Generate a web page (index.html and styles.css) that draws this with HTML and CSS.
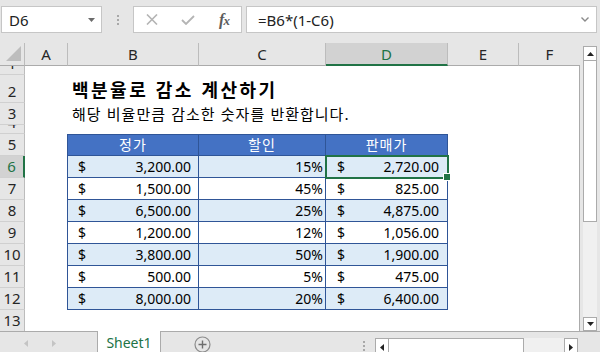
FILE: index.html
```html
<!DOCTYPE html>
<html lang="ko">
<head>
    <meta charset="UTF-8">
    <meta name="viewport" content="width=device-width, initial-scale=1.0">
    <title>백분율로 감소 계산하기</title>
    <link rel="stylesheet" href="styles.css">
</head>
<body>
<div class="app">

    <!-- Name box + formula bar -->
    <div class="formula-bar">
        <div class="name-box">
            <span>D6</span>
            <svg width="7" height="4" viewBox="0 0 7 4"><path d="M0 0h7L3.5 4z" fill="#6b6b6b"/></svg>
        </div>
        <div class="splitter"><i></i><i></i><i></i></div>
        <div class="fn-box">
            <svg width="12" height="11" viewBox="0 0 12 11"><path d="M1 0.5l10 10M11 0.5l-10 10" stroke="#b4b4b4" stroke-width="1.6" fill="none"/></svg>
            <svg width="14" height="10" viewBox="0 0 14 10"><path d="M1 5l4 4 8-8" stroke="#b4b4b4" stroke-width="1.8" fill="none"/></svg>
            <span class="fx">f<small>x</small></span>
        </div>
        <div class="formula-input">
            <span>=B6*(1-C6)</span>
            <svg width="8" height="5" viewBox="0 0 8 5"><path d="M0.5 0.5l3.5 3.5 3.5-3.5" stroke="#8a8a8a" stroke-width="1.4" fill="none"/></svg>
        </div>
    </div>

    <div class="sheet">
        <div class="grid">
            <div class="row heads">
                <div class="corner"><svg width="16" height="16" viewBox="0 0 16 16"><path d="M15 0v15H0z" fill="#bdbdbd"/></svg></div>
                <div>A</div><div>B</div><div>C</div><div class="on">D</div><div>E</div><div>F</div>
            </div>

            <div class="row r-thin">
                <div class="rh">1</div><div></div><div></div><div></div><div></div><div></div><div></div>
            </div>
            <div class="row r-title">
                <div class="rh">2</div><div></div><div class="title">백분율로 감소 계산하기</div><div></div><div></div><div></div><div></div>
            </div>
            <div class="row">
                <div class="rh">3</div><div></div><div class="subtitle">해당 비율만큼 감소한 숫자를 반환합니다.</div><div></div><div></div><div></div><div></div>
            </div>
            <div class="row r-thin">
                <div class="rh">4</div><div></div><div></div><div></div><div></div><div></div><div></div>
            </div>

            <div class="row thead">
                <div class="rh">5</div><div class="edge"></div>
                <div class="th">정가</div><div class="th">할인</div><div class="th">판매가</div>
                <div></div><div></div>
            </div>
            <div class="row tr alt">
                <div class="rh on">6</div><div class="edge"></div>
                <div class="td acct b"><span>$</span><span>3,200.00</span></div>
                <div class="td pct">15%</div>
                <div class="td acct d selected"><span>$</span><span>2,720.00</span></div>
                <div></div><div></div>
            </div>
            <div class="row tr">
                <div class="rh">7</div><div class="edge"></div>
                <div class="td acct b"><span>$</span><span>1,500.00</span></div>
                <div class="td pct">45%</div>
                <div class="td acct d"><span>$</span><span>825.00</span></div>
                <div></div><div></div>
            </div>
            <div class="row tr alt">
                <div class="rh">8</div><div class="edge"></div>
                <div class="td acct b"><span>$</span><span>6,500.00</span></div>
                <div class="td pct">25%</div>
                <div class="td acct d"><span>$</span><span>4,875.00</span></div>
                <div></div><div></div>
            </div>
            <div class="row tr">
                <div class="rh">9</div><div class="edge"></div>
                <div class="td acct b"><span>$</span><span>1,200.00</span></div>
                <div class="td pct">12%</div>
                <div class="td acct d"><span>$</span><span>1,056.00</span></div>
                <div></div><div></div>
            </div>
            <div class="row tr alt">
                <div class="rh">10</div><div class="edge"></div>
                <div class="td acct b"><span>$</span><span>3,800.00</span></div>
                <div class="td pct">50%</div>
                <div class="td acct d"><span>$</span><span>1,900.00</span></div>
                <div></div><div></div>
            </div>
            <div class="row tr">
                <div class="rh">11</div><div class="edge"></div>
                <div class="td acct b"><span>$</span><span>500.00</span></div>
                <div class="td pct">5%</div>
                <div class="td acct d"><span>$</span><span>475.00</span></div>
                <div></div><div></div>
            </div>
            <div class="row tr alt">
                <div class="rh">12</div><div class="edge"></div>
                <div class="td acct b"><span>$</span><span>8,000.00</span></div>
                <div class="td pct">20%</div>
                <div class="td acct d"><span>$</span><span>6,400.00</span></div>
                <div></div><div></div>
            </div>
            <div class="row">
                <div class="rh">13</div><div></div><div></div><div></div><div></div><div></div><div></div>
            </div>
        </div>

        <!-- vertical scrollbar -->
        <div class="vscroll">
            <div class="sbtn"><svg width="7" height="4" viewBox="0 0 7 4"><path d="M0 4h7L3.5 0z" fill="#222"/></svg></div>
            <div class="vthumb"></div>
            <div class="vtrack"></div>
            <div class="sbtn down"><svg width="7" height="4" viewBox="0 0 7 4"><path d="M0 0h7L3.5 4z" fill="#222"/></svg></div>
        </div>
    </div>

    <!-- sheet tabs -->
    <div class="tab-bar">
        <div class="tab-nav">
            <svg width="4" height="7" viewBox="0 0 4 7"><path d="M4 0v7L0 3.5z" fill="#c4c4c4"/></svg>
            <svg width="4" height="7" viewBox="0 0 4 7"><path d="M0 0v7l4-3.5z" fill="#c4c4c4"/></svg>
        </div>
        <div class="tab active">Sheet1</div>
        <div class="tab-add">
            <svg width="17" height="17" viewBox="0 0 17 17"><circle cx="8.5" cy="8.5" r="7.5" stroke="#8c8c8c" stroke-width="1.2" fill="none"/><path d="M8.5 4.5v8M4.5 8.5h8" stroke="#6e6e6e" stroke-width="1.4"/></svg>
        </div>
        <div class="hsplit"><i></i><i></i><i></i></div>
        <div class="hscroll">
            <div class="sbtn"><svg width="4" height="7" viewBox="0 0 4 7"><path d="M4 0v7L0 3.5z" fill="#222"/></svg></div>
            <div class="hthumb"></div>
            <div class="htrack"></div>
            <div class="sbtn"><svg width="4" height="7" viewBox="0 0 4 7"><path d="M0 0v7l4-3.5z" fill="#222"/></svg></div>
        </div>
    </div>

</div>
</body>
</html>
```

FILE: styles.css
```css
* {
    box-sizing: border-box;
}

body {
    margin: 0;
    background: #e6e6e6;
    font-family: "Noto Sans", "Noto Sans CJK KR", sans-serif;
    font-size: 14px;
    color: #000;
}

.app {
    width: 600px;
    height: 352px;
    display: flex;
    flex-direction: column;
    overflow: hidden;
}

/* ---------- formula bar ---------- */
.formula-bar {
    height: 43px;
    flex: none;
    display: flex;
    padding: 6px 0 0 1px;
}

.name-box {
    width: 101px;
    height: 27px;
    background: #fff;
    border: 1px solid #c6c6c6;
    display: flex;
    align-items: center;
    justify-content: space-between;
    padding: 0 6px 0 7px;
    font-size: 15px;
    color: #222;
}

.splitter {
    width: 31px;
    height: 27px;
    display: flex;
    flex-direction: column;
    align-items: center;
    justify-content: center;
    gap: 2px;
}

.splitter i, .hsplit i {
    display: block;
    width: 2px;
    height: 2px;
    background: #a8a8a8;
}

.fn-box {
    width: 109px;
    height: 27px;
    background: #fff;
    border: 1px solid #c6c6c6;
    display: grid;
    grid-template-columns: repeat(3, 36px);
    align-items: center;
    justify-items: center;
}

.fx {
    font-family: "Liberation Serif", serif;
    font-style: italic;
    font-weight: bold;
    font-size: 16px;
    color: #5c5c5c;
    letter-spacing: -1px;
}

.fx small {
    font-size: 13px;
}

.formula-input {
    margin-left: 4px;
    width: 351px;
    height: 27px;
    background: #fff;
    border: 1px solid #c6c6c6;
    display: flex;
    align-items: center;
    justify-content: space-between;
    padding: 0 7px 0 11px;
    font-size: 15px;
    color: #222;
}

/* ---------- sheet grid ---------- */
.sheet {
    height: 288px;
    flex: none;
    display: flex;
}

.grid {
    width: 580px;
    height: 288px;
    overflow: hidden;
}

.row {
    display: grid;
    grid-template-columns: 25px 43px 131px 127px 122px 71px 61px;
    height: 22px;
    line-height: 20px;
}

.row > div {
    background: #fff;
}

.row > div:last-child {
    border-right: 1px solid #ababab;
}

.heads {
    height: 23px;
}

.heads > div {
    background: #e6e6e6;
    border-right: 1px solid #bcbcbc;
    border-bottom: 1px solid #ababab;
    display: flex;
    align-items: center;
    justify-content: center;
    font-size: 15px;
    color: #262626;
}

.heads > div.corner {
    justify-content: flex-end;
    align-items: flex-end;
    padding: 0 2px 3px 0;
}

.heads > div.on {
    background: #d2d2d2;
    border-bottom: 2px solid #217346;
    color: #217346;
}

.heads > div:last-child {
    border-right: none;
}

.r-thin {
    height: 9px;
}

.r-title {
    height: 28px;
}

.row > .rh {
    background: #e6e6e6;
    border-right: 1px solid #bcbcbc;
    border-bottom: 1px solid #d0d0d0;
    display: flex;
    align-items: flex-end;
    justify-content: center;
    overflow: hidden;
    font-size: 15px;
    line-height: 22px;
    color: #262626;
}

.row > .rh.on {
    background: #d2d2d2;
    border-right: 2px solid #217346;
    color: #217346;
}

.title, .subtitle {
    white-space: nowrap;
    padding-left: 4px;
    font-family: "Noto Sans CJK KR", sans-serif;
}

.title {
    font-size: 18px;
    font-weight: bold;
    line-height: 28px;
    letter-spacing: 2.5px;
    position: relative;
    z-index: 1;
}

.subtitle {
    font-size: 15px;
    line-height: 21px;
    letter-spacing: 1px;
    position: relative;
    z-index: 1;
}

/* ---------- table ---------- */
.row > .edge {
    border-right: 1px solid #2f5597;
}

.thead > .th {
    background: #4472c4;
    color: #fff;
    border-top: 1px solid #2f5597;
    border-bottom: 1px solid #2f5597;
    border-right: 1px solid #2f5597;
    text-align: center;
    font-family: "Noto Sans CJK KR", sans-serif;
    font-size: 14px;
    line-height: 19px;
    letter-spacing: 1px;
}

.tr > .td {
    border-right: 1px solid #2f5597;
    border-bottom: 1px solid #2f5597;
    line-height: 21px;
}

.tr.alt > .td {
    background: #ddebf7;
}

.acct {
    display: flex;
    justify-content: space-between;
}

.acct.b {
    padding: 0 7px 0 10px;
}

.acct.d {
    padding: 0 8px 0 11px;
}

.pct {
    text-align: right;
    padding-right: 2px;
}

.selected {
    position: relative;
}

.selected::after {
    content: '';
    position: absolute;
    top: -1px;
    left: -1px;
    right: -2px;
    bottom: -2px;
    border: 2px solid #217346;
}

.selected::before {
    content: '';
    position: absolute;
    right: -4px;
    bottom: -4px;
    width: 6px;
    height: 6px;
    background: #217346;
    border: 1px solid #fff;
    z-index: 1;
}

/* ---------- scrollbars ---------- */
.vscroll {
    width: 14px;
    margin: 3px 0 0 3px;
    display: flex;
    flex-direction: column;
}

.sbtn {
    background: #fff;
    border: 1px solid #ababab;
    display: flex;
    align-items: center;
    justify-content: center;
}

.vscroll .sbtn {
    height: 15px;
}

.vscroll .sbtn.down {
    height: 14px;
}

.vthumb {
    height: 161px;
    background: #fff;
    border: 1px solid #ababab;
    border-top: none;
}

.vtrack {
    flex: 1;
    background: #f0f0f0;
}

/* ---------- sheet tabs ---------- */
.tab-bar {
    flex: 1;
    display: flex;
    border-top: 1px solid #ababab;
}

.tab-nav {
    width: 97px;
    display: flex;
    align-items: center;
    gap: 24px;
    padding: 0 0 2px 24px;
}

.tab {
    width: 64px;
    margin-top: -1px;
    background: #fff;
    border-left: 1px solid #ababab;
    border-right: 1px solid #ababab;
    color: #217346;
    font-size: 14px;
    text-align: center;
    line-height: 24px;
}

.tab-add {
    width: 190px;
    padding: 4px 0 0 33px;
}

.hsplit {
    width: 25px;
    display: flex;
    flex-direction: column;
    align-items: center;
    gap: 2px;
    padding-top: 9px;
    margin-right: -1px;
}

.hscroll {
    width: 203px;
    margin-top: 6px;
    display: flex;
}

.hscroll .sbtn {
    width: 14px;
}

.hthumb {
    width: 135px;
    background: #fff;
    border: 1px solid #ababab;
    border-left: none;
}

.htrack {
    flex: 1;
    background: #f0f0f0;
}
```
